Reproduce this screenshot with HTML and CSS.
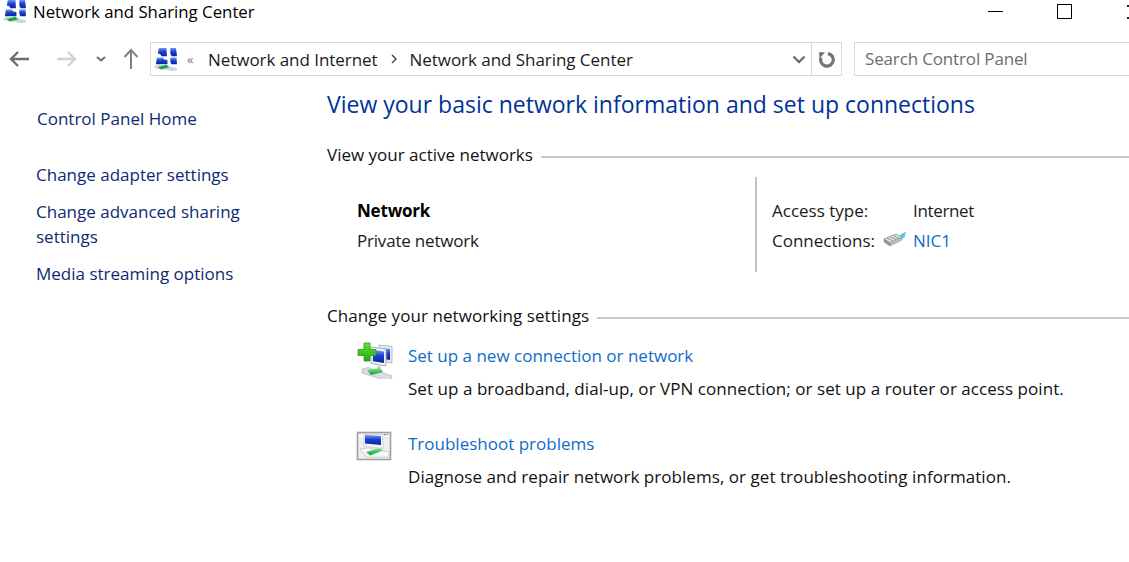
FILE: index.html
```html
<!DOCTYPE html>
<html lang="en">
<head>
<meta charset="utf-8">
<title>Network and Sharing Center</title>
<link rel="stylesheet" href="styles.css">
</head>
<body>
<svg class="defs" width="0" height="0">
  <defs>
    <linearGradient id="pane" x1="0" y1="0" x2="0" y2="1"><stop offset="0" stop-color="#6f9bf0"/><stop offset=".45" stop-color="#1c3fd0"/><stop offset="1" stop-color="#10249c"/></linearGradient>
    <linearGradient id="green" x1="0" y1="0" x2="0" y2="1"><stop offset="0" stop-color="#7fe88a"/><stop offset="1" stop-color="#129a3c"/></linearGradient>
    <linearGradient id="plus" x1="0" y1="0" x2="0" y2="1"><stop offset="0" stop-color="#66e028"/><stop offset="1" stop-color="#1fa81a"/></linearGradient>
  </defs>
  <symbol id="net" viewBox="0 0 24 24">
    <path d="M5 0h8l.5 8.500H8L6 6H4z" fill="url(#pane)"/><path d="M17 0h6l1 8.500h-5.500L17 6z" fill="url(#pane)"/>
    <path d="M3 10h6l2 2 3 .5V17H2z" fill="url(#pane)"/><path d="M17 10h6.500l.5 7H18l-1-3z" fill="url(#pane)"/>
    <path d="M0 19l7-2 17 4v2.500l-5 .5L1 21z" fill="#d0d5da"/>
    <path d="M4 20l9-2.500 3 2.500-9 2.500z" fill="#12a844"/>
  </symbol>
</svg>
<header class="titlebar">
  <svg class="icon-title"><use href="#net"/></svg>
  <span class="title">Network and Sharing Center</span>
  <div class="winbtns">
    <span class="minimize"></span>
    <span class="maximize"></span>
    <span class="close"></span>
  </div>
</header>
<nav class="navbar">
  <svg class="nav-arrow back" viewBox="0 0 22 16"><path d="M10 1 3 8l7 7M3 8h18" fill="none" stroke="#6e6e6e" stroke-width="2.400"/></svg>
  <svg class="nav-arrow forward" viewBox="0 0 22 16"><path d="M12 1 19 8l-7 7M19 8H1" fill="none" stroke="#d2d2d2" stroke-width="2.400"/></svg>
  <svg class="nav-drop" viewBox="0 0 10 6"><path d="M1 1l4 3.500L9 1" fill="none" stroke="#6e6e6e" stroke-width="2"/></svg>
  <svg class="nav-up" viewBox="0 0 16 22"><path d="M1.500 9 8 2l6.500 7M8 2v19" fill="none" stroke="#808080" stroke-width="2"/></svg>
  <div class="address">
    <svg class="icon-addr"><use href="#net"/></svg>
    <span class="chev">«</span>
    <span class="crumb">Network and Internet</span>
    <svg class="crumb-sep" viewBox="0 0 6 10"><path d="M1 1l4 4-4 4" fill="none" stroke="#444" stroke-width="1.400"/></svg>
    <span class="crumb">Network and Sharing Center</span>
    <svg class="addr-drop" viewBox="0 0 14 9"><path d="M1.500 1.500 7 7l5.500-5.500" fill="none" stroke="#707070" stroke-width="2.400"/></svg>
    <span class="refresh">
      <svg viewBox="0 0 18 18" class="refresh-icon"><path d="M10.500 2.700A6.700 6.700 0 1 1 3.200 7" fill="none" stroke="#757575" stroke-width="3.400"/><path d="M1 1.200h6.500L1.800 8z" fill="#757575"/></svg>
    </span>
  </div>
  <div class="search">Search Control Panel</div>
</nav>
<div class="content">
  <aside class="sidebar">
    <a class="home">Control Panel Home</a>
    <a class="side-link first">Change adapter settings</a>
    <a class="side-link">Change advanced sharing settings</a>
    <a class="side-link">Media streaming options</a>
  </aside>
  <main class="main">
    <h1 class="heading">View your basic network information and set up connections</h1>
    <div class="section-head"><span>View your active networks</span><i class="rule"></i></div>
    <div class="network">
      <div class="net-name">
        <strong>Network</strong>
        <span>Private network</span>
      </div>
      <div class="net-info">
        <span>Access type:</span><span class="internet">Internet</span>
        <span class="conn-label">Connections:
          <svg class="nic-icon" viewBox="0 0 24 16">
            <path d="M1 8l12-5 6 3L7 12z" fill="#dfe2e5" stroke="#8a9096" stroke-width=".7"/>
            <path d="M1 8l6 4v3l-6-4z" fill="#9a9a88" stroke="#7b8288" stroke-width=".5"/>
            <path d="M7 12l12-6v3L7 15z" fill="#b8bec4" stroke="#8a9096" stroke-width=".5"/>
            <path d="M4 7l6 3M7 5.700l6 3M10 4.500l6 3M3 11v-2M5 12.500v-2" stroke="#7c8288" stroke-width=".8"/>
            <path d="M16 4.500 23 .5l-1.500 6-2.500 1z" fill="#5fc0e8"/>
          </svg>
        </span>
        <a class="link">NIC1</a>
      </div>
    </div>
    <div class="section-head change"><span>Change your networking settings</span><i class="rule"></i></div>
    <div class="task">
      <svg class="task-icon" viewBox="0 0 38 38">
        <path d="M24 4l13 1.500V22l-13-2z" fill="#e4eaf0" stroke="#b4bec8"/>
        <path d="M27 7l8 1v11l-8-1.500z" fill="url(#pane)"/>
        <path d="M16 6l15 2v17l-15-2.500z" fill="#eef2f6" stroke="#a8b2be"/>
        <path d="M18 9l11 1.500V22l-11-1.800z" fill="url(#pane)"/>
        <path d="M22 25l4 .5v3l-4-.5z" fill="#c8ced4"/>
        <path d="M9 2h6v6.500h6v6h-6V20H9v-5.500H3v-6h6z" fill="url(#plus)" stroke="#2a9a20" stroke-width=".8"/>
        <path d="M7 28l6-1.500 24 8.500-1 4-7 0-22-7z" fill="#d8dde2" stroke="#b0b6bc" stroke-width=".7"/>
        <path d="M12 29l13-2 3 4-12 3z" fill="url(#green)"/>
      </svg>
      <div class="task-text">
        <a class="link">Set up a new connection or network</a>
        <p>Set up a broadband, dial-up, or VPN connection; or set up a router or access point.</p>
      </div>
    </div>
    <div class="task">
      <svg class="task-icon" viewBox="0 0 38 38">
        <rect x="2.500" y="3.500" width="33" height="27" fill="#eceef0" stroke="#a0a0a0" stroke-width="1.600"/>
        <path d="M4 6h30v2H4z" fill="#fff"/>
        <path d="M9 5.500l19 0v14l-19-2z" fill="#f2f5f8" stroke="#b8c0c8" stroke-width=".6"/>
        <path d="M10 6l16 1v9l-16-1.500z" fill="url(#pane)"/>
        <path d="M29 5h1.200v1.200H29zM31.500 5h1.200v1.200h-1.200z" fill="#666"/>
        <path d="M5 20l8-1 21 4v5H12z" fill="#f6f8fa" stroke="#b8bec4" stroke-width=".6"/>
        <path d="M11 23l13-4 4 2.500-13 5z" fill="url(#green)"/>
      </svg>
      <div class="task-text">
        <a class="link">Troubleshoot problems</a>
        <p>Diagnose and repair network problems, or get troubleshooting information.</p>
      </div>
    </div>
  </main>
</div>
</body>
</html>
```
FILE: styles.css
```css
* { box-sizing: border-box; }
html, body { margin: 0; height: 100%; }
body {
  width: 1129px;
  height: 562px;
  overflow: hidden;
  background: #fff;
  color: #1a1a1a;
  font-family: "Open Sans", "Noto Sans", sans-serif;
  font-size: 17px;
  line-height: 25px;
}
.defs { display: block; height: 0; position: absolute; }
a { display: block; }
.link { color: #0f6cc8; }

.titlebar { display: flex; align-items: flex-start; height: 26px; padding-left: 3px; }
.icon-title { width: 23px; height: 23px; flex: none; }
.title { margin-left: 7px; margin-top: -1px; color: #000; font-size: 16.8px; }
.winbtns { margin-left: auto; display: flex; align-items: flex-start; height: 26px; }
.minimize { width: 15px; height: 1px; background: #000; margin-top: 11px; margin-right: 54px; }
.maximize { width: 15px; height: 15px; border: 1px solid #000; margin-top: 4px; margin-right: 55px; }
.close { width: 2px; height: 14px; margin-top: 5px; border-top: 2px solid #222; border-bottom: 2px solid #222; }

.navbar { display: flex; align-items: center; height: 34px; margin-top: 16px; }
.nav-arrow { width: 22px; height: 16px; flex: none; }
.back { margin-left: 8px; }
.forward { margin-left: 26px; }
.nav-drop { width: 10px; height: 6px; margin-left: 18px; flex: none; }
.nav-up { width: 16px; height: 22px; margin-left: 17px; flex: none; }
.address {
  display: flex; align-items: center; flex: none;
  width: 692px; height: 34px; margin-left: 11px;
  border: 1px solid #d9d9d9;
  color: #1a1a1a;
}
.icon-addr { width: 23px; height: 23px; margin-left: 3px; flex: none; }
.chev { margin-left: 10px; width: 14px; color: #777; font-size: 13px; }
.crumb { margin-left: 7px; white-space: nowrap; letter-spacing: -.05px; }
.crumb-sep { width: 6px; height: 10px; margin: 0 13px; flex: none; }
.crumb-sep + .crumb { margin-left: 0; }
.addr-drop { width: 14px; height: 9px; margin-left: auto; flex: none; }
.refresh { display: flex; align-items: center; justify-content: center; height: 32px; width: 30px; margin-left: 5px; border-left: 1px solid #d9d9d9; flex: none; }
.refresh-icon { width: 17px; height: 17px; }
.search {
  flex: 1; height: 34px; margin-left: 12px;
  border: 1px solid #d9d9d9; border-right: 0;
  padding: 3px 10px; color: #6d6d6d;
  letter-spacing: -.15px;
  white-space: nowrap;
}

.content { display: flex; }
.sidebar { width: 327px; padding: 30px 0 0 36px; flex: none; }
.sidebar a { color: #0d2b70; width: 215px; }
.home { padding-left: 1px; }
.side-link { margin-bottom: 12px; }
.side-link.first { margin-top: 31px; }
.main { flex: 1; min-width: 0; }
.heading { margin: 12px 0 0; font-size: 23px; line-height: 32px; font-weight: 400; color: #003399; white-space: nowrap; }
.section-head { display: flex; align-items: center; margin-top: 22px; white-space: nowrap; color: #111; }
.rule { flex: 1; height: 2px; background: #c9c9c9; margin-left: 8px; margin-top: 4px; }
.network { display: flex; margin-top: 10px; height: 95px; }
.net-name { width: 430px; padding: 21px 0 0 30px; display: flex; flex-direction: column; border-right: 2px solid #c4c4c4; }
.net-name strong { color: #000; font-weight: 700; letter-spacing: -.2px; }
.net-name span { margin-top: 5px; letter-spacing: -.2px; }
.net-info { display: grid; grid-template-columns: 141px auto; grid-auto-rows: 30px; padding: 21px 0 0 15px; }
.internet { letter-spacing: -.35px; }
.nic-icon { width: 24px; height: 16px; margin-left: 4px; vertical-align: 0; }
.section-head.change { margin-top: 31px; letter-spacing: .06px; }
.task { display: flex; height: 88px; padding-left: 28px; }
.task-icon { width: 38px; height: 38px; flex: none; margin-top: 13px; }
.task-text { margin-left: 15px; padding-top: 15px; }
.task-text p { margin: 8px 0 0; white-space: nowrap; color: #111; letter-spacing: .05px; }
```
